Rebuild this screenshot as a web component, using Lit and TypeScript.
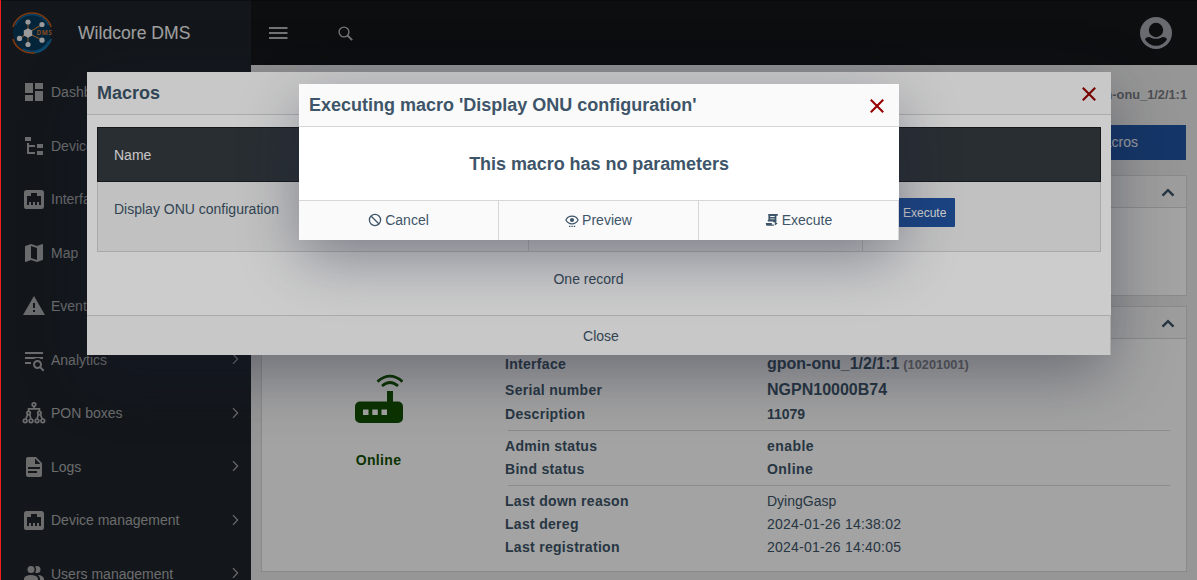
import { LitElement, html, css, svg } from "lit";
import { customElement } from "lit/decorators.js";

const ICONS: Record<string, string> = {
  dashboard: "M13,3V9H21V3M13,21H21V11H13M3,21H11V15H3M3,13H11V3H3V13Z",
  tree: "M3,3H9V7H3V3M15,10H21V14H15V10M15,17H21V21H15V17M13,13H7V18H13V20H7L5,20V9H7V11H13V13Z",
  ethernet:
    "M7,15H9V18H11V15H13V18H15V15H17V18H19V9H15V6H9V9H5V18H7V15M4.38,3H19.63C20.94,3 22,4.06 22,5.38V19.63A2.37,2.37 0 0,1 19.63,22H4.38C3.06,22 2,20.94 2,19.63V5.38C2,4.06 3.06,3 4.38,3Z",
  map: "M20.5 3l-.16.03L15 5.1 9 3 3.36 4.9c-.21.07-.36.25-.36.48V20.5c0 .28.22.5.5.5l.16-.03L9 18.9l6 2.1 5.64-1.9c.21-.07.36-.25.36-.48V3.5c0-.28-.22-.5-.5-.5zM15 19l-6-2.11V5l6 2.11V19z",
  alert: "M13 14H11V9H13M13 18H11V16H13M1 21H23L12 2L1 21Z",
  search:
    "M19.31 18.9L22.39 22L21 23.39L17.88 20.32C17.19 20.75 16.37 21 15.5 21C13 21 11 19 11 16.5C11 14 13 12 15.5 12C18 12 20 14 20 16.5C20 17.38 19.75 18.21 19.31 18.9M15.5 19C16.88 19 18 17.88 18 16.5C18 15.12 16.88 14 15.5 14C14.12 14 13 15.12 13 16.5C13 17.88 14.12 19 15.5 19M21 4V6H3V4H21M3 16V14H9V16H3M3 11V9H21V11H18.97C17.96 10.37 16.77 10 15.5 10C14.23 10 13.04 10.37 12.03 11H3Z",
  file: "M13 9h5.5L13 3.5V9M6 2h8l6 6v12a2 2 0 0 1-2 2H6a2 2 0 0 1-2-2V4c0-1.11.89-2 2-2m9 16v-2H6v2h9m3-4v-2H6v2h12Z",
  users:
    "M16 17V19H2V17S2 13 9 13 16 17 16 17M12.5 7.5A3.5 3.5 0 1 0 9 11A3.5 3.5 0 0 0 12.5 7.5M15.94 13A5.32 5.32 0 0 1 18 17V19H22V17S22 13.37 15.94 13M15 4A3.39 3.39 0 0 0 13.07 4.59A5 5 0 0 1 13.07 10.41A3.39 3.39 0 0 0 15 11A3.5 3.5 0 0 0 15 4Z",
};

const MENU: { icon: string; label: string; sub?: boolean }[] = [
  { icon: "dashboard", label: "Dashboard" },
  { icon: "tree", label: "Devices", sub: true },
  { icon: "ethernet", label: "Interfaces", sub: true },
  { icon: "map", label: "Map" },
  { icon: "alert", label: "Events", sub: true },
  { icon: "search", label: "Analytics", sub: true },
  { icon: "pon", label: "PON boxes", sub: true },
  { icon: "file", label: "Logs", sub: true },
  { icon: "ethernet", label: "Device management", sub: true },
  { icon: "users", label: "Users management", sub: true },
];

const ponIcon = svg`
  <g fill="none" stroke="currentColor" stroke-width="1.7">
    <circle cx="12" cy="3.6" r="1.8"/>
    <path d="M12 5.4v2.8M6.6 10.4V7.9H17.4V10.4"/>
    <circle cx="6.6" cy="12" r="1.7"/><circle cx="17.4" cy="12" r="1.7"/>
    <path d="M5.6 13.6 3.8 17.8M7.6 13.6 9 17.8M16.4 13.6 15 17.8M18.4 13.6 20.2 17.8"/>
    <circle cx="3.2" cy="19.8" r="1.8"/><circle cx="9" cy="19.8" r="1.8"/>
    <circle cx="15" cy="19.8" r="1.8"/><circle cx="20.8" cy="19.8" r="1.8"/>
  </g>`;

const closeIcon = html`<svg class="x" viewBox="0 0 14 14">
  <path d="M.8.8 13.2 13.2M13.2.8.8 13.2" stroke="currentColor" stroke-width="2.1" />
</svg>`;

const scriptIcon = html`<svg class="ico" viewBox="0 0 14 14" fill="currentColor">
  <path fill-rule="evenodd" d="M3.2 1H12.8V2.8H11.4V9.2H8.2V8.4H2.8V6.8H3.4V2.6H3.2ZM5.2 3.1V4H9.6V3.1ZM5.2 5.4V6.3H9.6V5.4Z" />
  <path d="M.8 9.9H6.8V11.4H8.8V12.8H2.4C1.4 12.8.8 12 .8 9.9ZM9.8 8.6 12.6 10.6 9.8 12.6Z" />
</svg>`;

@customElement("app-root")
export class AppRoot extends LitElement {
  static styles = css`
    :host {
      display: block;
      position: relative;
      width: 1197px;
      height: 580px;
      overflow: hidden;
      font: 14px/20px "Liberation Sans", Arial, sans-serif;
      color: #3e5569;
      background: #ebebeb;
    }
    * { box-sizing: border-box; }
    svg { display: block; flex: none; }
    .page { display: grid; grid-template-columns: 251px 1fr; height: 580px; }
    .side { background: #1f252b; color: #a9aaac; overflow: hidden; height: 580px; border-top: 1px solid #15181b; }
    .brand { height: 64px; display: flex; align-items: center; padding-left: 11px; gap: 25px; color: #fbfbfb; font-size: 17.6px; }
    .menu { padding-top: .5px; }
    .item { height: 53.5px; display: flex; align-items: center; padding: 0 12.5px 0 21.5px; }
    .item .label { flex: 1; padding-left: 5.5px; }
    .item .chev { margin-top: -1.5px; }
    .main { min-width: 0; }
    .top { height: 65px; background: #151719; display: flex; align-items: center; padding: 0 25px 0 18px; border-top: 1px solid #101112; color: #b4b6b8; }
    .top .glass { margin-left: 49px; }
    .top .user { margin-left: auto; color: #a3a9b1; }
    .content { padding: 19px 10px 0; }
    .crumb { text-align: right; font-weight: bold; font-size: 12.8px; line-height: 22px; color: #797c82; }
    .actions { display: flex; justify-content: flex-end; padding: 19px 1px 15px 0; }
    .primary { background: #2255a4; color: #f4f6fa; height: 35px; padding: 0 48px; line-height: 35px; }
    .card { border: 1px solid #d9d9d9; background: #fff; margin-bottom: 10px; }
    .card.a { height: 121px; }
    .card.b { height: 266px; }
    .cardhead { height: 32px; background: #f7f7f7; border-bottom: 1px solid #d9d9d9; display: flex; align-items: center; justify-content: flex-end; padding: 2px 11px 0 0; }
    .info { display: grid; grid-template-columns: 233px 1fr; }
    .status { display: flex; flex-direction: column; align-items: center; color: #125000; font-weight: bold; padding-top: 35px; gap: 27px; letter-spacing: .35px; }
    .rows { padding: 12px 16px 0 10px; }
    .row { display: grid; grid-template-columns: 262px 1fr; height: 23px; line-height: 23px; }
    .row b { letter-spacing: .3px; }
    .row.tall { height: 26px; line-height: 26px; }
    .row .big { font-size: 16px; font-weight: bold; }
    .row .small { font-size: 12.8px; color: #8c8f94; }
    .row .num { letter-spacing: .22px; }
    .row .plain { letter-spacing: 0; }
    .row .wide { letter-spacing: .45px; }
    .rule { height: 1px; background: #dbdbdb; margin: 4px 0 4px 3px; }
    .overlay { position: absolute; inset: 0; background: rgba(0, 0, 0, .2); }
    .modal { position: absolute; background: #fff; box-shadow: 0 20px 60px -2px rgba(27, 33, 58, .4); }
    .outer { left: 87px; top: 72px; width: 1024px; height: 283px; }
    .inner { left: 299px; top: 84px; width: 600px; height: 156px; }
    .mhead { height: 43px; background: #fafafa; border-bottom: 1px solid #d6d6d6; display: flex; justify-content: space-between; align-items: center; padding: 0 15px 0 10px; font-size: 18px; font-weight: bold; }
    .x { width: 14px; height: 14px; color: #960000; margin-top: 2px; }
    .mbody { height: 200px; padding: 12px 10px 0; }
    .table { display: grid; grid-template-columns: 432px 334px 238px; }
    .th { height: 55px; background: #343a40; color: #f8f8f8; border: solid #1b2024; border-width: 1px 0; padding: 17px 17px; }
    .th:first-child { border-left-width: 1px; padding-left: 16px; }
    .th:nth-child(3) { border-right-width: 1px; }
    .td { height: 70px; background: #f2f2f2; border: solid #d4d4d4; border-width: 0 1px 1px 0; padding: 17px 16px; }
    .td.first { border-left-width: 1px; }
    .run { display: inline-flex; align-items: center; gap: 3px; height: 29px; margin-top: -1px; padding: 0 9px 0 7px; background: #2255a4; color: #fff; font-size: 12px; border-radius: 1px; }
    .count { text-align: center; padding-top: 17px; margin-right: 21px; }
    .foot { height: 40px; display: flex; background: #fafafa; border-top: 1px solid #d6d6d6; }
    .foot div { flex: 1; display: flex; align-items: center; justify-content: center; gap: 3px; border-right: 1px solid #d6d6d6; }
    .foot .solo { padding-left: 5px; }
    .inner .foot div { padding-bottom: 1px; }
    .ask { height: 73px; display: flex; align-items: center; justify-content: center; font-size: 18px; font-weight: bold; letter-spacing: -.05px; }
    .ico { width: 14px; height: 14px; }
    .edge { position: absolute; left: 0; top: 0; width: 1px; height: 580px; background: #ee1c1c; }
  `;

  private chevronUp() {
    return html`<svg width="14" height="10" viewBox="0 0 14 10">
      <path d="M1.5 7.7 7 2.2 12.5 7.7" fill="none" stroke="#3e5569" stroke-width="2.4" />
    </svg>`;
  }

  private logo() {
    return html`<svg width="42" height="42" viewBox="0 0 42 42">
      <circle cx="21" cy="21" r="18.8" fill="#08395c" />
      <g fill="none" stroke-width="1.6">
        <path d="M1.9 15A20 20 0 0 1 40.1 15" stroke="#c85a17" />
        <path d="M1.9 27A20 20 0 0 0 24 40.8" stroke="#c85a17" />
        <path d="M24 40.8A20 20 0 0 0 40.1 27" stroke="#1480c4" />
        <path d="M4.4 13A18.4 18.4 0 0 1 37.6 13" stroke="#0e69a4" />
        <path d="M12 37A18.4 18.4 0 0 0 37.6 29" stroke="#0e69a4" />
      </g>
      <path d="M17 21V10M17 21 31 12.5M17 21 31 28M17 21V32.5M17 21 8.5 26.5" stroke="#c8813f" stroke-width="1.1" />
      <g fill="#f2f2f2">
        <path d="M17 16.2 21.2 18.6V23.4L17 25.8 12.8 23.4V18.6Z" />
        <circle cx="17" cy="10" r="2.6" /><circle cx="31" cy="12.5" r="2.6" />
        <circle cx="31" cy="28.2" r="2.6" /><circle cx="17" cy="32.5" r="2.6" /><circle cx="8.5" cy="26.4" r="2.6" />
      </g>
      <text x="25.6" y="22.8" font-size="6.4" font-weight="bold" letter-spacing=".4" fill="#d07430" font-family="Open Sans, sans-serif">DMS</text>
    </svg>`;
  }

  render() {
    return html`
      <div class="page">
        <nav class="side">
          <div class="brand">${this.logo()}<span>Wildcore DMS</span></div>
          <div class="menu">
            ${MENU.map(
              (m) => html`<div class="item">
                <svg width="24" height="24" viewBox="0 0 24 24" fill="currentColor">
                  ${m.icon === "pon" ? ponIcon : svg`<path fill-rule="evenodd" d=${ICONS[m.icon]} />`}
                </svg>
                <span class="label">${m.label}</span>
                ${m.sub
                  ? html`<svg class="chev" width="7" height="12" viewBox="0 0 7 12">
                      <path d="M1 1.2 5.6 6 1 10.8" fill="none" stroke="currentColor" stroke-width="1.2" />
                    </svg>`
                  : ""}
              </div>`
            )}
          </div>
        </nav>
        <div class="main">
          <header class="top">
            <svg width="19" height="14" viewBox="0 0 19 14">
              <path d="M0 2H18.5M0 7H18.5M0 12H18.5" stroke="currentColor" stroke-width="2" />
            </svg>
            <svg class="glass" width="16" height="16" viewBox="0 0 16 16" fill="none" stroke="currentColor">
              <circle cx="7" cy="7" r="4.9" stroke-width="1.4" />
              <path d="M10.5 10.5 15.2 15.2" stroke-width="1.8" />
            </svg>
            <svg class="user" width="32" height="32" viewBox="0 0 32 32">
              <circle cx="16" cy="16" r="16" fill="currentColor" />
              <circle cx="16" cy="13" r="7.2" fill="#151719" />
              <path d="M5 22.2C6.2 20.4 8 19.6 10 20.2 13.8 22.4 18.2 22.4 22 20.2 24 19.6 25.8 20.4 27 22.2 24.8 26.2 20.6 28.8 16 28.8S7.2 26.2 5 22.2Z" fill="#151719" />
            </svg>
          </header>
          <div class="content">
            <div class="crumb">gpon-onu_1/2/1:1</div>
            <div class="actions"><div class="primary">Macros</div></div>
            <section class="card a"><div class="cardhead">${this.chevronUp()}</div></section>
            <section class="card b">
              <div class="cardhead">${this.chevronUp()}</div>
              <div class="info">
                <div class="status">
                  <svg width="48" height="49" viewBox="0 0 48 49">
                    <path fill-rule="evenodd" fill="currentColor" d="M5 27.5H32V17H38V27.5H43A5 5 0 0 1 48 32.5V44A5 5 0 0 1 43 49H5A5 5 0 0 1 0 44V32.5A5 5 0 0 1 5 27.5ZM8 35.5V41H13.5V35.5ZM17.3 35.5V41H22.8V35.5ZM26.5 35.5V41H32V35.5Z" />
                    <path d="M22.5 7.6Q35 -3.4 47.5 7.6M27 12Q35 5 43 12" fill="none" stroke="currentColor" stroke-width="2.8" />
                  </svg>
                  <span>Online</span>
                </div>
                <div class="rows">
                  <div class="row tall"><b>Interface</b><span><span class="big">gpon-onu_1/2/1:1</span> <b class="small plain">(10201001)</b></span></div>
                  <div class="row tall"><b>Serial number</b><span class="big">NGPN10000B74</span></div>
                  <div class="row"><b>Description</b><b class="plain">11079</b></div>
                  <div class="rule"></div>
                  <div class="row"><b>Admin status</b><b class="wide">enable</b></div>
                  <div class="row"><b>Bind status</b><b class="wide">Online</b></div>
                  <div class="rule"></div>
                  <div class="row"><b>Last down reason</b><span>DyingGasp</span></div>
                  <div class="row"><b>Last dereg</b><span class="num">2024-01-26 14:38:02</span></div>
                  <div class="row"><b>Last registration</b><span class="num">2024-01-26 14:40:05</span></div>
                </div>
              </div>
            </section>
          </div>
        </div>
      </div>

      <div class="overlay"></div>
      <div class="modal outer">
        <div class="mhead"><span>Macros</span>${closeIcon}</div>
        <div class="mbody">
          <div class="table">
            <div class="th">Name</div><div class="th"></div><div class="th"></div>
            <div class="td first">Display ONU configuration</div>
            <div class="td"></div>
            <div class="td"><span class="run">${scriptIcon}<span>Execute</span></span></div>
          </div>
          <div class="count">One record</div>
        </div>
        <div class="foot"><div class="solo">Close</div></div>
      </div>

      <div class="overlay"></div>
      <div class="modal inner">
        <div class="mhead"><span>Executing macro 'Display ONU configuration'</span>${closeIcon}</div>
        <div class="ask">This macro has no parameters</div>
        <div class="foot">
          <div>
            <svg class="ico" viewBox="0 0 14 14" fill="none" stroke="currentColor" stroke-width="1.3">
              <circle cx="7" cy="7" r="5.6" /><path d="M3 3 11 11" />
            </svg>
            <span>Cancel</span>
          </div>
          <div>
            <svg class="ico" viewBox="0 0 14 14">
              <path d="M.9 7C3.4 1.9 10.6 1.9 13.1 7 10.6 12.1 3.4 12.1.9 7Z" fill="none" stroke="currentColor" stroke-width="1.2" />
              <circle cx="7" cy="7" r="2.1" fill="currentColor" />
              <path d="M4 13.4H5.4M6.4 13.4H7.8M8.8 13.4H10.2" stroke="currentColor" stroke-width="1.1" />
            </svg>
            <span>Preview</span>
          </div>
          <div>${scriptIcon}<span>Execute</span></div>
        </div>
      </div>
      <div class="edge"></div>
    `;
  }
}
